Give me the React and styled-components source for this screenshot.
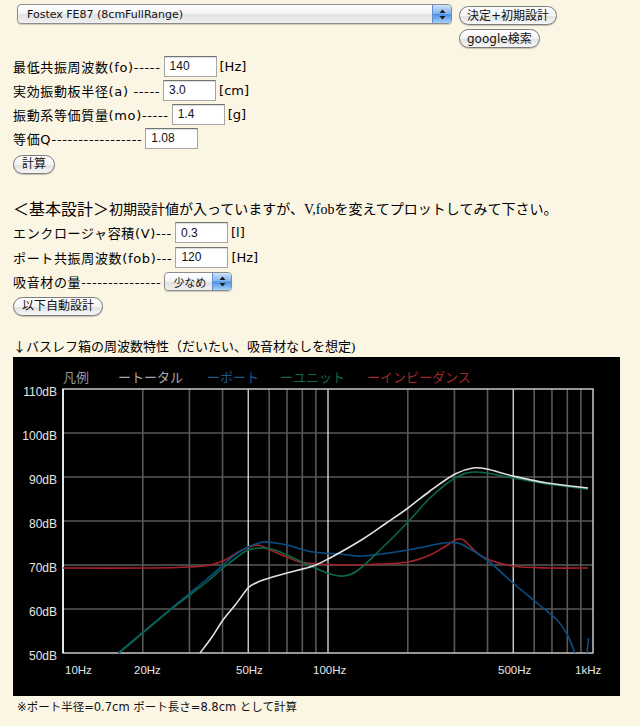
import styled, { createGlobalStyle } from "styled-components";

const GlobalStyle = createGlobalStyle`
  html, body {
    margin: 0;
    padding: 0;
    background: #fbf5e4;
  }
  body {
    font-family: "DejaVu Sans", "Noto Sans CJK JP", sans-serif;
    color: #000;
  }
`;

// chart geometry (page coordinates)
const X0 = 63;
const X1 = 593;
const Y0 = 389;
const Y1 = 653;
const fx = (f) => X0 + 265 * Math.log10(f / 10);

const smooth = (pts) => {
  let d = `M${pts[0][0]},${pts[0][1]}`;
  for (let i = 0; i < pts.length - 1; i++) {
    const p0 = pts[i - 1] || pts[i];
    const p1 = pts[i];
    const p2 = pts[i + 1];
    const p3 = pts[i + 2] || p2;
    const c1x = p1[0] + (p2[0] - p0[0]) / 6;
    const c1y = p1[1] + (p2[1] - p0[1]) / 6;
    const c2x = p2[0] - (p3[0] - p1[0]) / 6;
    const c2y = p2[1] - (p3[1] - p1[1]) / 6;
    d += ` C${c1x.toFixed(1)},${c1y.toFixed(1)} ${c2x.toFixed(1)},${c2y.toFixed(1)} ${p2[0]},${p2[1]}`;
  }
  return d;
};

const curves = [
  {
    color: "#a3222b",
    pts: [
      [63, 568], [150, 568], [190, 567], [210, 565], [225, 560], [240, 551],
      [257, 545], [270, 550], [287, 557], [300, 562], [320, 564], [340, 565],
      [380, 564], [408, 562], [430, 555], [446, 546], [455, 540], [460, 539],
      [465, 541], [483, 557], [513, 566], [550, 568], [588, 568],
    ],
  },
  {
    color: "#0b4e85",
    pts: [
      [118, 653], [143, 632], [167, 612], [190, 593], [207, 579], [223, 565],
      [236, 554], [248, 547], [263, 542], [275, 543], [287, 545], [313, 552],
      [340, 554], [363, 556], [408, 550], [443, 543], [455, 543], [463, 545],
      [487, 560], [513, 583], [537, 603], [557, 620], [567, 634], [575, 653],
    ],
  },
  {
    color: "#0b6a45",
    pts: [
      [119, 653], [144, 632], [168, 612], [191, 594], [208, 581], [223, 568],
      [236, 558], [248, 550], [263, 548], [275, 550], [287, 555], [313, 567],
      [330, 574], [343, 576], [357, 571], [380, 550], [408, 522], [430, 498],
      [455, 478], [477, 472], [513, 478], [547, 484], [588, 489],
    ],
  },
  {
    color: "#e2e2e2",
    pts: [
      [200, 653], [212, 637], [223, 620], [236, 604], [248, 588], [256, 583],
      [263, 580], [287, 573], [313, 566], [330, 558], [363, 539], [385, 524],
      [408, 508], [430, 491], [455, 474], [473, 468], [487, 469], [513, 476],
      [547, 483], [588, 488],
    ],
  },
];

const freqs = [20, 30, 40, 60, 70, 80, 90, 200, 300, 400, 600, 700, 800, 900];
const majors = [50, 100, 500];
const dbLabels = ["110dB", "100dB", "90dB", "80dB", "70dB", "60dB", "50dB"];
const hzLabels = [
  ["10Hz", 65], ["20Hz", 134], ["50Hz", 236], ["100Hz", 313], ["500Hz", 498], ["1kHz", 575],
];
const legend = [
  ["凡例", 63, "#9a9a9a"],
  ["ートータル", 118, "#a8a8a8"],
  ["ーポート", 207, "#175a8c"],
  ["ーユニット", 280, "#0d6b4a"],
  ["ーインピーダンス", 367, "#a02a2a"],
];

const Page = styled.div`
  padding: 4px 0 12px 13px;
`;

const TopBar = styled.div`
  display: flex;
  gap: 7px;
  margin-left: 4px;
  height: 50px;
`;

const ButtonStack = styled.div`
  display: flex;
  flex-direction: column;
  align-items: flex-start;
  gap: 4px;
  padding-top: 2px;
`;

const PopUp = styled.div`
  display: flex;
  align-items: stretch;
  box-sizing: border-box;
  width: ${(p) => p.$w}px;
  height: ${(p) => p.$h || 20}px;
  border: 1px solid #8c8c8c;
  border-radius: 4px;
  background: linear-gradient(#ffffff, #f3f3f3 50%, #e2e2e2 51%, #f0f0f0);
  box-shadow: 0 1px 1px rgba(0, 0, 0, 0.18);
  overflow: hidden;
`;

const PopUpText = styled.span`
  flex: 1;
  display: flex;
  align-items: center;
  padding-left: ${(p) => p.$pad || 9}px;
  font-family: "DejaVu Sans", "Noto Sans CJK JP", sans-serif;
  font-size: 11px;
  color: #111;
  white-space: nowrap;
`;

const PopUpCap = styled.span`
  width: 18px;
  display: flex;
  align-items: center;
  justify-content: center;
  border-left: 1px solid #5f8fcf;
  background: linear-gradient(#cfe3fb, #7fb3ee 48%, #4a8fe2 52%, #a6d0fa);
`;

const AquaButton = styled.button`
  display: inline-flex;
  align-items: center;
  justify-content: center;
  box-sizing: border-box;
  height: 19px;
  padding: 0 ${(p) => p.$pad || 8}px;
  border: 1px solid #7b7b7b;
  border-radius: 10px;
  background: linear-gradient(#ffffff, #f4f4f4 50%, #e3e3e3 56%, #f7f7f7);
  box-shadow: 0 1px 1px rgba(0, 0, 0, 0.22);
  font-family: "DejaVu Sans", "Noto Sans CJK JP", sans-serif;
  font-size: 12px;
  color: #111;
  line-height: 1;
  cursor: pointer;
`;

const Section = styled.div`
  margin-top: ${(p) => p.$top || 0}px;
`;

const Row = styled.div`
  display: flex;
  align-items: center;
  height: ${(p) => p.$h || 24}px;
  font-size: 13px;
  white-space: nowrap;
`;

const Label = styled.span`
  margin-right: 3px;
  letter-spacing: 0.65px;
`;

const Field = styled.input`
  box-sizing: border-box;
  width: 53px;
  height: 21px;
  padding: 0 0 0 5px;
  border: 1px solid #a5a5a5;
  border-top-color: #747474;
  box-shadow: inset 0 1px 1px rgba(0, 0, 0, 0.15);
  background: #fff;
  font-family: "Liberation Sans", sans-serif;
  font-size: 12px;
  color: #111;
  outline: none;
`;

const Unit = styled.span`
  margin-left: 3px;
`;

const Heading = styled.div`
  margin-top: 24px;
  height: 20px;
  display: flex;
  align-items: center;
  white-space: nowrap;
`;

const HeadTitle = styled.span`
  font-family: "DejaVu Sans", "Noto Sans CJK JP", sans-serif;
  font-size: 16px;
`;

const SerifText = styled.span`
  font-family: "Liberation Serif", "Noto Sans CJK JP", serif;
  font-size: ${(p) => p.$size || 14}px;
`;

const DownArrow = styled.span`
  font-family: "Noto Sans CJK JP", sans-serif;
  font-size: 13px;
`;

const Caption = styled.div`
  margin-top: 22px;
  height: 16px;
  display: flex;
  align-items: center;
`;

const Chart = styled.div`
  margin-top: 3px;
  width: 607px;
  height: 339px;
  background: #000;
`;

const Note = styled.div`
  margin: 2px 0 0 4px;
  height: 16px;
  display: flex;
  align-items: center;
  font-family: "DejaVu Sans", "Noto Sans CJK JP", sans-serif;
  font-size: 11.5px;
  color: #111;
`;

const Arrows = () => (
  <svg width="7" height="11" viewBox="0 0 7 11">
    <path d="M3.5 0.5 L6.5 4 L0.5 4 Z" fill="#1a1a1a" />
    <path d="M3.5 10.5 L6.5 7 L0.5 7 Z" fill="#1a1a1a" />
  </svg>
);

const PlotSvg = () => (
  <svg width="607" height="339" viewBox="13 357 607 339">
    {[433, 477, 521, 565, 609].map((y) => (
      <line key={y} x1={X0} x2={X1} y1={y} y2={y} stroke="#585858" strokeWidth="1.6" />
    ))}
    {freqs.map((f) => (
      <line key={f} x1={fx(f)} x2={fx(f)} y1={Y0} y2={Y1} stroke="#585858" strokeWidth="1.6" />
    ))}
    {majors.map((f) => (
      <line key={f} x1={fx(f)} x2={fx(f)} y1={Y0} y2={Y1} stroke="#f2f2f2" strokeWidth="1.2" />
    ))}
    <rect x={X0} y={Y0} width={X1 - X0} height={Y1 - Y0} fill="none" stroke="#c8c8c8" strokeWidth="1.5" />
    <line x1={X0} x2={X0} y1={Y0} y2={Y1} stroke="#fff" strokeWidth="1.5" />
    {curves.map((c) => (
      <path key={c.color} d={smooth(c.pts)} fill="none" stroke={c.color} strokeWidth="1.6" />
    ))}
    <path d="M587 653 L588.5 638" stroke="#0b4e85" strokeWidth="1.5" fill="none" />
    {legend.map(([t, x, col]) => (
      <text key={t} x={x} y={382} fill={col} fontSize="13" fontFamily="'Noto Sans CJK JP', sans-serif">
        {t}
      </text>
    ))}
    {dbLabels.map((t, i) => (
      <text
        key={t}
        x={57}
        y={Y0 + i * 44 + 7}
        fill="#e6e6e6"
        fontSize="12"
        textAnchor="end"
        fontFamily="'Liberation Sans', sans-serif"
      >
        {t}
      </text>
    ))}
    {hzLabels.map(([t, x]) => (
      <text key={t} x={x} y={674} fill="#e6e6e6" fontSize="11.5" fontFamily="'Liberation Sans', sans-serif">
        {t}
      </text>
    ))}
  </svg>
);

const App = () => {
  return (
    <Page>
      <GlobalStyle />
      <TopBar>
        <PopUp $w={435}>
          <PopUpText>Fostex FE87 (8cmFullRange)</PopUpText>
          <PopUpCap>
            <Arrows />
          </PopUpCap>
        </PopUp>
        <ButtonStack>
          <AquaButton $pad={7}>決定+初期設計</AquaButton>
          <AquaButton $pad={7}>google検索</AquaButton>
        </ButtonStack>
      </TopBar>

      <Section>
        <Row>
          <Label>最低共振周波数(fo)-----</Label>
          <Field defaultValue="140" />
          <Unit>[Hz]</Unit>
        </Row>
        <Row>
          <Label>実効振動板半径(a) -----</Label>
          <Field defaultValue="3.0" />
          <Unit>[cm]</Unit>
        </Row>
        <Row>
          <Label>振動系等価質量(mo)-----</Label>
          <Field defaultValue="1.4" />
          <Unit>[g]</Unit>
        </Row>
        <Row>
          <Label>等価Q-----------------</Label>
          <Field defaultValue="1.08" />
        </Row>
        <Section $top={3}>
          <AquaButton>計算</AquaButton>
        </Section>
      </Section>

      <Heading>
        <HeadTitle>＜基本設計＞</HeadTitle>
        <SerifText>初期設計値が入っていますが、V,fobを変えてプロットしてみて下さい。</SerifText>
      </Heading>
      <Section $top={3}>
        <Row $h={24.5}>
          <Label>エンクロージャ容積(V)---</Label>
          <Field defaultValue="0.3" />
          <Unit>[l]</Unit>
        </Row>
        <Row $h={24.5}>
          <Label>ポート共振周波数(fob)---</Label>
          <Field defaultValue="120" />
          <Unit>[Hz]</Unit>
        </Row>
        <Row $h={24.5}>
          <Label>吸音材の量---------------</Label>
          <PopUp $w={68} $h={19}>
            <PopUpText $pad={8}>少なめ</PopUpText>
            <PopUpCap>
              <Arrows />
            </PopUpCap>
          </PopUp>
        </Row>
        <Section $top={1}>
          <AquaButton>以下自動設計</AquaButton>
        </Section>
      </Section>

      <Caption>
        <DownArrow>↓</DownArrow>
        <SerifText $size={13}>バスレフ箱の周波数特性（だいたい、吸音材なしを想定)</SerifText>
      </Caption>
      <Chart>
        <PlotSvg />
      </Chart>
      <Note>※ポート半径=0.7cm ポート長さ=8.8cm として計算</Note>
    </Page>
  );
};

export default App;
